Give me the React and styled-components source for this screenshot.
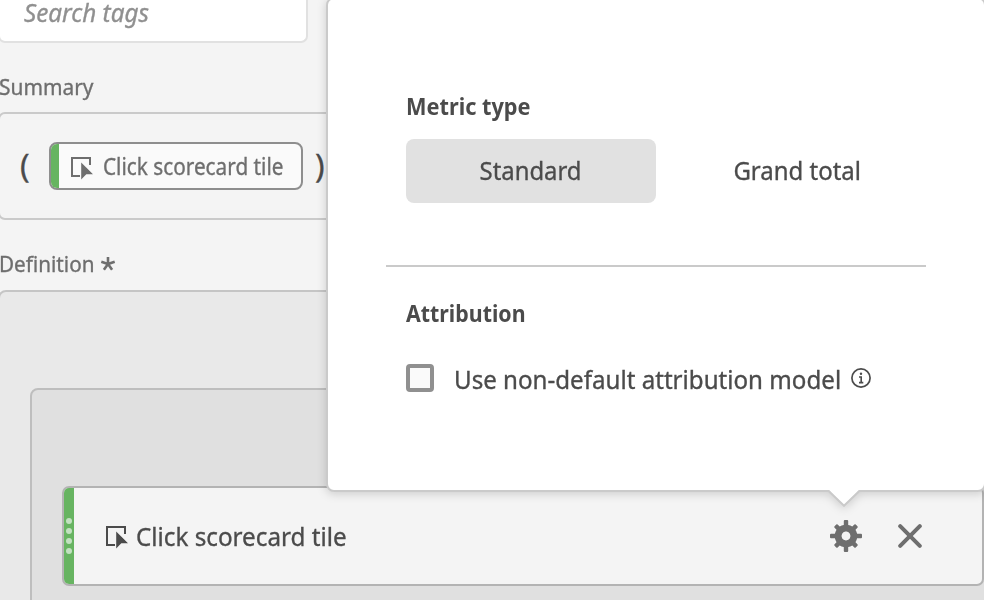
import React from "react";
import styled, { createGlobalStyle } from "styled-components";

const GlobalStyle = createGlobalStyle`
  *, *::before, *::after { box-sizing: border-box; }
  body {
    margin: 0;
    overflow: hidden;
    background: #f4f4f4;
    font-family: "Noto Sans", "Open Sans", sans-serif;
    color: #4b4b4b;
  }
`;

const Page = styled.div`
  position: relative;
  width: 984px;
  height: 600px;
  overflow: hidden;
  background: #f4f4f4;
`;

const Builder = styled.main`
  display: flex;
  flex-direction: column;
  margin-left: -2px;
  width: 1100px;
`;

const Text = styled.span`
  display: inline-block;
  flex: none;
  white-space: nowrap;
  font-size: ${(p) => p.$size || 24}px;
  font-weight: ${(p) => p.$weight || 400};
  font-style: ${(p) => (p.$italic ? "italic" : "normal")};
  line-height: ${(p) => p.$line || 32}px;
  color: ${(p) => p.$color || "#4b4b4b"};
  -webkit-text-stroke: ${(p) => (p.$weight ? 0 : 0.35)}px currentColor;
  transform: scaleX(${(p) => p.$stretch || 0.88});
  transform-origin: ${(p) => p.$origin || "left"} center;
`;

const SearchField = styled.div`
  display: flex;
  align-items: flex-start;
  width: 310px;
  height: 47px;
  margin-top: -4px;
  padding: 2px 0 0 24px;
  background: #fff;
  border: 2px solid #e1e1e1;
  border-top-color: #fff;
  border-radius: 0 0 7px 7px;
`;

const FieldLabel = styled.div`
  display: flex;
  height: 32px;
  margin-top: ${(p) => p.$top}px;
  padding-left: 1px;
`;

const SummaryBox = styled.section`
  display: flex;
  align-items: center;
  height: 108px;
  margin-top: 10px;
  padding-left: 20px;
  border: 2px solid #cacaca;
  border-radius: 7px;
`;

const Chip = styled.div`
  display: flex;
  align-items: center;
  width: 254px;
  height: 48px;
  margin: 0 12px 0 19px;
  overflow: hidden;
  background: #fafafa;
  border: 2px solid #8e8e8e;
  border-radius: 8px;
`;

const Paren = styled.span`
  flex: none;
  width: 10px;
  height: 32px;
  font-size: 32px;
  line-height: 32px;
  -webkit-text-stroke: 0.3px currentColor;
`;

const ChipStripe = styled.span`
  flex: none;
  width: 8px;
  height: 100%;
  background: #67b461;
`;

const DefinitionBox = styled.section`
  height: 400px;
  margin-top: 11px;
  padding: 96px 0 0 30px;
  background: #e9e9e9;
  border: 2px solid #c5c5c5;
  border-radius: 8px;
`;

const Container = styled.div`
  height: 400px;
  padding: 96px 0 0 30px;
  background: #e0e0e0;
  border: 2px solid #bebebe;
  border-radius: 8px;
`;

const Tile = styled.div`
  display: flex;
  align-items: center;
  width: 922px;
  height: 100px;
  overflow: hidden;
  background: #f4f4f4;
  border: 2px solid #b3b3b3;
  border-radius: 7px;
`;

const Grip = styled.div`
  display: flex;
  flex: none;
  flex-direction: column;
  align-items: center;
  justify-content: center;
  gap: 4px;
  width: 10px;
  height: 100%;
  background: #67b461;
`;

const GripDot = styled.i`
  width: 6px;
  height: 6px;
  border-radius: 50%;
  background: #c2e1c0;
`;

const Actions = styled.div`
  display: flex;
  align-items: center;
  gap: 36px;
  margin-left: auto;
  padding-right: 60px;
`;

const Icon = styled.svg`
  display: block;
  flex: none;
  width: ${(p) => p.$w}px;
  height: ${(p) => p.$h}px;
  margin: ${(p) => p.$margin || 0};
  color: ${(p) => p.$color || "#6e6e6e"};
`;

const Popover = styled.aside`
  position: absolute;
  top: -3px;
  left: 326px;
  width: 660px;
  height: 495px;
  padding: 91px 58px 0;
  background: #fff;
  border: 2px solid #cacaca;
  border-radius: 8px;
  filter: drop-shadow(0 2px 5px rgba(0, 0, 0, 0.16));
`;

const PopoverTip = styled.svg`
  position: absolute;
  left: 499px;
  bottom: -17px;
  width: 34px;
  height: 17px;
`;

const Group = styled.div`
  padding-left: 20px;
`;

const Heading = styled.h2`
  height: 32px;
  margin: 0;
  line-height: 32px;
`;

const Segments = styled.div`
  display: flex;
  margin-top: 17px;
`;

const Segment = styled.button`
  display: flex;
  align-items: center;
  justify-content: center;
  flex: none;
  width: ${(p) => p.$width}px;
  height: 64px;
  padding: 0 0 2px;
  border: 0;
  border-radius: 8px;
  background: ${(p) => (p.$selected ? "#e1e1e1" : "transparent")};
  font-family: inherit;
`;

const Divider = styled.hr`
  height: 2px;
  margin: 62px 0 30px;
  border: 0;
  width: 540px;
  background: #cacaca;
`;

const CheckRow = styled.label`
  display: flex;
  align-items: center;
  height: 32px;
  margin-top: 33px;
`;

const CheckBox = styled.span`
  flex: none;
  width: 28px;
  height: 28px;
  margin-right: 20px;
  background: #fafafa;
  border: 4px solid #909090;
  border-radius: 4px;
`;

const CheckText = styled.span`
  width: 397px;
  padding-top: 2px;
`;

function EventIcon({ color, margin }) {
  return (
    <Icon viewBox="0 0 22 23" $w={22} $h={23} $color={color} $margin={margin}>
      <path d="M9 19H1V1H19V8" fill="none" stroke="currentColor" strokeWidth="2" />
      <path d="M10.2 5.4L22 17.2H15.3L10.2 22.5Z" fill="currentColor" />
    </Icon>
  );
}

function GearIcon() {
  return (
    <Icon viewBox="-16 -16 32 32" $w={32} $h={32}>
      <mask id="hub">
        <rect x="-16" y="-16" width="32" height="32" fill="#fff" />
        <circle r="4.7" fill="#000" />
      </mask>
      {[0, 45, 90, 135].map((a) => (
        <rect key={a} x="-2.2" y={a % 90 ? -15 : -16} width="4.4" height={a % 90 ? 30 : 32} rx="1" fill="currentColor" mask="url(#hub)" transform={`rotate(${a})`} />
      ))}
      <circle r="8" fill="none" stroke="currentColor" strokeWidth="6.6" />
    </Icon>
  );
}

export default function App() {
  return (
    <Page>
      <GlobalStyle />
      <Builder>
        <SearchField>
          <Text $italic $color="#909090" $size={25} $line={24} $stretch={0.97}>Search tags</Text>
        </SearchField>
        <FieldLabel $top={27}>
          <Text $size={22} $color="#6e6e6e" $stretch={0.95}>Summary</Text>
        </FieldLabel>
        <SummaryBox>
          <Paren>(</Paren>
          <Chip>
            <ChipStripe />
            <EventIcon margin="4px 10px 0 12px" />
            <Text $color="#6e6e6e" $stretch={0.865}>Click scorecard tile</Text>
          </Chip>
          <Paren>)</Paren>
        </SummaryBox>
        <FieldLabel $top={27}>
          <Text $size={22} $color="#6e6e6e" $stretch={0.94}>Definition</Text>
          <Icon viewBox="-8 -8 16 16" $w={16} $h={16} $margin="9px 0 0 -1px">
            <path d="M0 0V-7M0 0L6.7-2.2M0 0L4.1 5.7M0 0L-4.1 5.7M0 0L-6.7-2.2" stroke="currentColor" strokeWidth="2.6" />
          </Icon>
        </FieldLabel>
        <DefinitionBox>
          <Container>
            <Tile>
              <Grip><GripDot /><GripDot /><GripDot /><GripDot /></Grip>
              <EventIcon color="#4b4b4b" margin="2px 8px 0 32px" />
              <Text $size={26} $stretch={0.932}>Click scorecard tile</Text>
              <Actions>
                <GearIcon />
                <Icon viewBox="0 0 24 24" $w={24} $h={24}>
                  <path d="M2.2 2.2L21.8 21.8M21.8 2.2L2.2 21.8" stroke="currentColor" strokeWidth="4" strokeLinecap="round" />
                </Icon>
              </Actions>
            </Tile>
          </Container>
        </DefinitionBox>
      </Builder>
      <Popover>
        <Group>
          <Heading><Text $weight={700} $stretch={0.906}>Metric type</Text></Heading>
          <Segments>
            <Segment $width={250} $selected><Text $size={26} $origin="center" $stretch={0.918}>Standard</Text></Segment>
            <Segment $width={282}><Text $size={26} $origin="center" $stretch={0.922}>Grand total</Text></Segment>
          </Segments>
        </Group>
        <Divider />
        <Group>
          <Heading><Text $weight={700} $stretch={0.89}>Attribution</Text></Heading>
          <CheckRow>
            <CheckBox />
            <CheckText><Text $size={26} $stretch={0.928}>Use non-default attribution model</Text></CheckText>
            <Icon viewBox="0 0 20 20" $w={20} $h={20} $color="#4b4b4b">
              <circle cx="10" cy="10" r="9.1" fill="none" stroke="currentColor" strokeWidth="1.7" />
              <circle cx="10" cy="5.8" r="1.2" fill="currentColor" />
              <path d="M8 9H10.2V14.5M8 14.6H12.3" fill="none" stroke="currentColor" strokeWidth="1.6" />
            </Icon>
          </CheckRow>
        </Group>
        <PopoverTip viewBox="0 0 34 17">
          <path d="M2 0H32L17 15Z" fill="#fff" />
          <path d="M1.5 1L17 15.8L32.5 1" fill="none" stroke="#cacaca" strokeWidth="2" />
        </PopoverTip>
      </Popover>
    </Page>
  );
}
